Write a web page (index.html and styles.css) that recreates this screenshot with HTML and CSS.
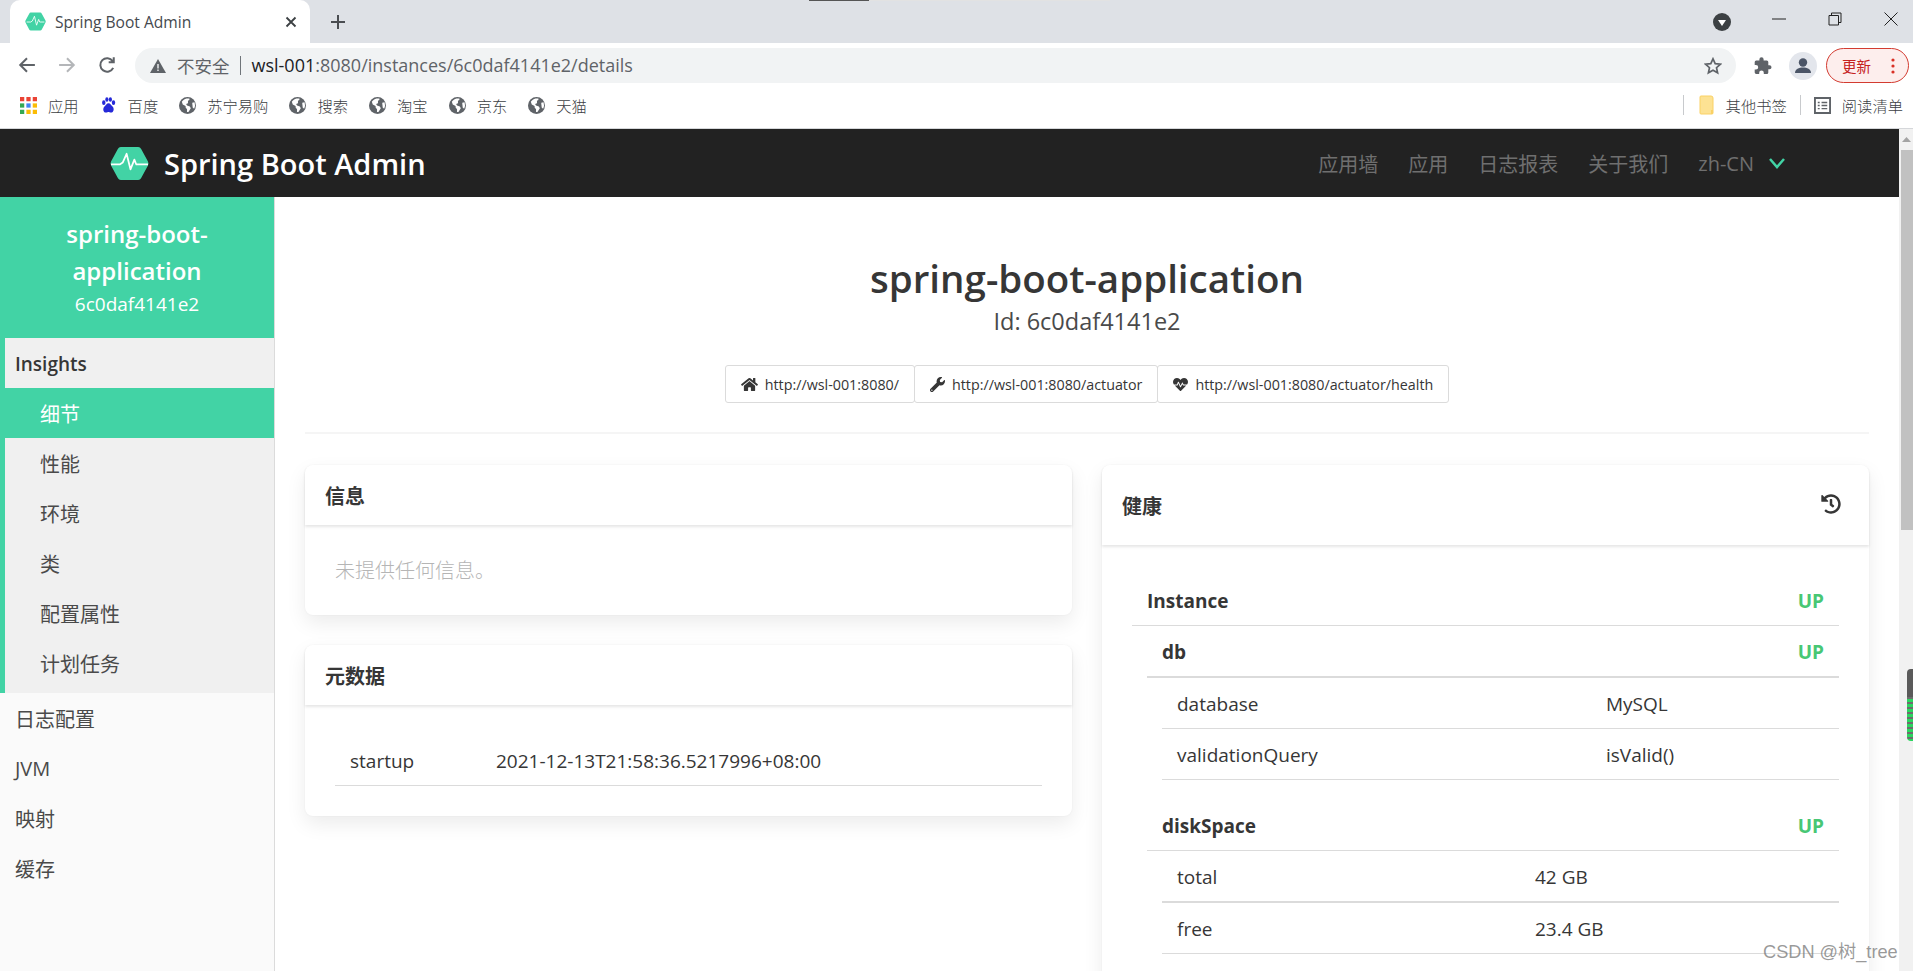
FILE: index.html
```html
<!DOCTYPE html>
<html lang="zh-CN">
<head>
<meta charset="utf-8">
<title>Spring Boot Admin</title>
<link rel="stylesheet" href="styles.css">
</head>
<body>
<div class="top-progress"><span class="top-progress-fill"></span></div>
<div class="tabbar">
  <div class="tab">
    <svg class="tab-fav" viewBox="0 0 40 36"><path class="hex" d="M11 1h18q2 0 3 2l7 13q1 2 0 4l-7 13q-1 2-3 2H11q-2 0-3-2L1 20q-1-2 0-4L8 3q1-2 3-2z"/><path class="pulse" d="M3 19h8l3-2 4-9 4 17 4-11 2 5h9"/></svg>
    <span class="tab-title">Spring Boot Admin</span>
    <svg class="tab-close" viewBox="0 0 12 12"><path d="M1.5 1.5l9 9M10.5 1.5l-9 9"/></svg>
  </div>
  <svg class="tab-new" viewBox="0 0 16 16"><path d="M8 1v14M1 8h14"/></svg>
  <div class="win-controls">
    <svg class="win-profile" viewBox="0 0 18 18"><circle cx="9" cy="9" r="9" fill="#3c4043"/><path d="M5 7h8l-4 6z" fill="#fff"/></svg>
    <svg class="win-btn" viewBox="0 0 14 14"><path d="M0 7h14"/></svg>
    <svg class="win-btn" viewBox="0 0 14 14"><path d="M1 3.5h9.5V13H1zM3.5 3.5V1H13v9.5h-2.5"/></svg>
    <svg class="win-btn" viewBox="0 0 14 14"><path d="M.5.5l13 13M13.500 .5l-13 13"/></svg>
  </div>
</div>
<div class="toolbar">
  <svg class="tb-ico" viewBox="0 0 16 16"><path class="st-dark" d="M15 8H2M8 2L2 8l6 6"/></svg>
  <svg class="tb-ico" viewBox="0 0 16 16"><path class="st-light" d="M1 8h13M8 2l6 6-6 6"/></svg>
  <svg class="tb-ico" viewBox="0 0 16 16"><path class="st-dark" d="M13.500 10.500A6 6 0 1 1 13 4.500M14 1v4.500H9.500"/></svg>
  <div class="omnibox">
    <svg class="warn" viewBox="0 0 16 14"><path d="M8 0l8 14H0z" fill="#5f6368"/><path d="M7.300 5h1.400v4.500H7.300zM7.300 10.500h1.400V12H7.300z" fill="#f1f3f4"/></svg>
    <span class="insecure">不安全</span>
    <span class="omni-sep"></span>
    <span class="url"><span class="url-host">wsl-001</span>:8080/instances/6c0daf4141e2/details</span>
    <svg class="star" viewBox="0 0 18 18"><path d="M9 1.800l2.200 4.800 5.200.6-3.900 3.500 1.100 5.100L9 13.200l-4.600 2.600 1.100-5.100-3.900-3.500 5.200-.6z"/></svg>
  </div>
  <svg class="puzzle" viewBox="0 0 18 18"><path d="M15.500 8.300h-1.200V5a1.500 1.500 0 0 0-1.500-1.500H9.600V2.300a2.100 2.100 0 0 0-4.200 0v1.200H2.200A1.500 1.500 0 0 0 .7 5v3h1.200a2.300 2.300 0 0 1 0 4.600H.7v3A1.500 1.500 0 0 0 2.200 17h3v-1.200a2.300 2.300 0 0 1 4.600 0V17h3a1.500 1.500 0 0 0 1.500-1.500v-3.200h1.200a2 2 0 0 0 0-4z"/></svg>
  <svg class="avatar" viewBox="0 0 28 28"><circle cx="14" cy="14" r="14" fill="#e3e6ec"/><circle cx="14" cy="10.500" r="4.200" fill="#4b5567"/><path d="M6 21c0-4 4-5.500 8-5.500s8 1.500 8 5.500z" fill="#4b5567"/></svg>
  <div class="update"><span>更新</span><svg class="update-dots" viewBox="0 0 4 16"><circle cx="2" cy="2" r="1.600"/><circle cx="2" cy="8" r="1.600"/><circle cx="2" cy="14" r="1.600"/></svg></div>
</div>
<div class="bookmarks">
  <div class="bm bm-apps">
    <svg class="bm-ico" viewBox="0 0 16 16"><rect x="0" y="0" width="4" height="4" fill="#ea4335"/><rect x="6" y="0" width="4" height="4" fill="#ea4335"/><rect x="12" y="0" width="4" height="4" fill="#ea4335"/><rect x="0" y="6" width="4" height="4" fill="#34a853"/><rect x="6" y="6" width="4" height="4" fill="#4285f4"/><rect x="12" y="6" width="4" height="4" fill="#fbbc05"/><rect x="0" y="12" width="4" height="4" fill="#34a853"/><rect x="6" y="12" width="4" height="4" fill="#fbbc05"/><rect x="12" y="12" width="4" height="4" fill="#fbbc05"/></svg>
    <span>应用</span>
  </div>
  <div class="bm">
    <svg class="bm-ico" viewBox="0 0 18 18" fill="#2529d8"><ellipse cx="4" cy="6" rx="1.800" ry="2.500"/><ellipse cx="7.300" cy="2.700" rx="1.700" ry="2.400"/><ellipse cx="11" cy="2.700" rx="1.700" ry="2.400"/><ellipse cx="14.300" cy="6" rx="1.800" ry="2.500"/><path d="M9 6.500c2 0 2.800 2.300 4.300 3.500 2 1.700 1.500 6.500-1.800 6.500-1.300 0-1.700-.5-2.500-.5s-1.300.5-2.600.5C3 16.500 2.800 11.700 4.700 10 6.200 8.800 7 6.500 9 6.500z"/></svg>
    <span>百度</span>
  </div>
  <div class="bm"><svg class="bm-ico globe" viewBox="0 0 18 18"><use href="#globe"/></svg><span>苏宁易购</span></div>
  <div class="bm"><svg class="bm-ico globe" viewBox="0 0 18 18"><use href="#globe"/></svg><span>搜索</span></div>
  <div class="bm"><svg class="bm-ico globe" viewBox="0 0 18 18"><use href="#globe"/></svg><span>淘宝</span></div>
  <div class="bm"><svg class="bm-ico globe" viewBox="0 0 18 18"><use href="#globe"/></svg><span>京东</span></div>
  <div class="bm"><svg class="bm-ico globe" viewBox="0 0 18 18"><use href="#globe"/></svg><span>天猫</span></div>
  <div class="bm-right">
    <span class="bm-sep"></span>
    <div class="bm"><svg class="bm-ico folder" viewBox="0 0 16 20"><path d="M1 2q0-1 1-1h10q2 0 2 2v15q0 1-1 1H2q-1 0-1-1z" fill="#fde293" stroke="#fad165"/><path d="M12 19v-4h2v4z" fill="#fad165"/></svg><span>其他书签</span></div>
    <span class="bm-sep"></span>
    <div class="bm"><svg class="bm-ico" viewBox="0 0 18 18"><path d="M1 1h16v16H1z" fill="#fff" stroke="#5f6368" stroke-width="2"/><path d="M4 5h2v1.500H4zM8 5h6v1.500H8zM4 8.300h2v1.500H4zM8 8.300h6v1.500H8zM4 11.600h2v1.500H4zM8 11.600h6v1.500H8z" fill="#5f6368"/></svg><span>阅读清单</span></div>
  </div>
</div>
<svg class="defs" width="0" height="0"><defs><g id="globe"><circle cx="9" cy="9" r="9" fill="#5f6368"/><path d="M8 1.500c-2 .4-4 1.800-5 3.500l1 3 3 1.500v1.500l1.500 2v3H10l2.500-4-1-2-3-1-1-1.500 2-1V4l1.500-.8V1.700z" fill="#fff"/><path d="M14 6l2.500-.5.500 4-1 3-1.500-1.500z" fill="#fff"/></g></defs></svg>

<div class="viewport">
  <div class="page">
    <header class="navbar">
      <div class="brand">
        <svg class="logo" viewBox="0 0 40 36"><path class="hex" d="M11 1h18q2 0 3 2l7 13q1 2 0 4l-7 13q-1 2-3 2H11q-2 0-3-2L1 20q-1-2 0-4L8 3q1-2 3-2z"/><path class="pulse" d="M1 19h9l3-2 4-9 4 16 4-10 2 5h12"/></svg>
        <span class="brand-name">Spring Boot Admin</span>
      </div>
      <nav class="nav">
        <a class="nav-item">应用墙</a>
        <a class="nav-item">应用</a>
        <a class="nav-item">日志报表</a>
        <a class="nav-item">关于我们</a>
        <a class="nav-item nav-lang">zh-CN<svg class="chev" viewBox="0 0 18 12"><path d="M2 2l7 8 7-8"/></svg></a>
      </nav>
    </header>
    <div class="content">
      <aside class="sidebar">
        <div class="side-head">
          <div class="side-name">spring-boot-<br>application</div>
          <div class="side-id">6c0daf4141e2</div>
        </div>
        <div class="side-group">
          <div class="side-item side-top">Insights</div>
          <div class="side-item side-sub active">细节</div>
          <div class="side-item side-sub">性能</div>
          <div class="side-item side-sub">环境</div>
          <div class="side-item side-sub">类</div>
          <div class="side-item side-sub">配置属性</div>
          <div class="side-item side-sub">计划任务</div>
        </div>
        <div class="side-rest">
          <div class="side-item side-top">日志配置</div>
          <div class="side-item side-top">JVM</div>
          <div class="side-item side-top">映射</div>
          <div class="side-item side-top">缓存</div>
        </div>
      </aside>
      <main class="main">
        <section class="hero">
          <h1 class="hero-title">spring-boot-application</h1>
          <div class="hero-id">Id: 6c0daf4141e2</div>
          <div class="links">
            <a class="link-btn"><svg class="fa" viewBox="0 0 576 512"><path d="M280.37 148.26L96 300.11V464a16 16 0 0 0 16 16l112.06-.29a16 16 0 0 0 15.92-16V368a16 16 0 0 1 16-16h64a16 16 0 0 1 16 16v95.64a16 16 0 0 0 16 16.05L464 480a16 16 0 0 0 16-16V300L295.67 148.26a12.19 12.19 0 0 0-15.3 0zM571.6 251.47L488 182.56V44.05a12 12 0 0 0-12-12h-56a12 12 0 0 0-12 12v72.61L318.47 43a48 48 0 0 0-61 0L4.34 251.47a12 12 0 0 0-1.6 16.9l25.5 31A12 12 0 0 0 45.15 301l235.22-193.74a12.19 12.19 0 0 1 15.3 0L530.9 301a12 12 0 0 0 16.9-1.6l25.5-31a12 12 0 0 0-1.7-16.93z"/></svg>http://wsl-001:8080/</a>
            <a class="link-btn"><svg class="fa fa-s" viewBox="0 0 512 512"><path d="M507.73 109.1c-2.24-9.03-13.54-12.09-20.12-5.51l-74.36 74.36-67.88-11.31-11.31-67.88 74.36-74.36c6.62-6.62 3.43-17.9-5.66-20.16-47.38-11.74-99.55.91-136.58 37.93-39.64 39.64-50.55 97.1-34.05 147.2L18.74 402.76c-24.99 24.99-24.99 65.51 0 90.5 24.99 24.99 65.51 24.99 90.5 0l213.21-213.21c50.12 16.71 107.47 5.68 147.37-34.22 37.07-37.07 49.7-89.32 37.91-136.73zM64 472c-13.25 0-24-10.75-24-24 0-13.26 10.75-24 24-24s24 10.74 24 24c0 13.25-10.75 24-24 24z"/></svg>http://wsl-001:8080/actuator</a>
            <a class="link-btn"><svg class="fa fa-s" viewBox="0 0 512 512"><path d="M320.2 243.8l-49.7 99.4c-6 12.1-23.4 11.7-28.9-.6l-56.9-126.3-30 71.7H60.6l182.5 186.5c7.1 7.3 18.6 7.3 25.7 0L451.4 288H342.3l-22.1-44.2zM473.7 73.9l-2.4-2.5c-51.5-52.6-135.8-52.6-187.4 0L256 100l-27.9-28.5c-51.5-52.7-135.9-52.7-187.4 0l-2.4 2.4C-10.4 123.7-12.5 203 31 256h102.4l35.9-86.2c5.4-12.9 23.6-13.2 29.4-.4l58.2 129.3 49-97.9c5.9-11.8 22.7-11.8 28.6 0l27.6 55.2H481c43.5-53 41.4-132.3-7.3-182.1z"/></svg>http://wsl-001:8080/actuator/health</a>
          </div>
        </section>
        <hr class="divider">
        <div class="columns">
          <div class="col">
            <div class="card card-info">
              <div class="card-head">信息</div>
              <div class="card-body empty">未提供任何信息。</div>
            </div>
            <div class="card card-meta">
              <div class="card-head">元数据</div>
              <div class="card-body">
                <div class="meta-row"><span class="meta-key">startup</span><span>2021-12-13T21:58:36.5217996+08:00</span></div>
              </div>
            </div>
          </div>
          <div class="col">
            <div class="card card-health">
              <div class="card-head card-head-tall">
                <span>健康</span>
                <svg class="history" viewBox="0 0 512 512"><path d="M504 255.531c.253 136.64-111.18 248.372-247.82 248.468-59.015.042-113.223-20.53-155.822-54.911-11.077-8.94-11.905-25.541-1.839-35.607l11.267-11.267c8.609-8.609 22.353-9.551 31.891-1.984C173.062 425.135 212.781 440 256 440c101.705 0 184-82.311 184-184 0-101.705-82.311-184-184-184-48.814 0-93.149 18.969-126.068 49.932l50.754 50.754c10.08 10.08 2.941 27.314-11.313 27.314H24c-8.837 0-16-7.163-16-16V38.627c0-14.254 17.234-21.393 27.314-11.314l49.372 49.372C129.209 34.136 189.552 8 256 8c136.81 0 247.747 110.78 248 247.531zm-180.912 78.784l9.823-12.63c8.138-10.463 6.253-25.542-4.21-33.679L288 256.349V152c0-13.255-10.745-24-24-24h-16c-13.255 0-24 10.745-24 24v135.651l65.409 50.874c10.463 8.137 25.541 6.253 33.679-4.21z"/></svg>
              </div>
              <div class="card-body health">
                <div class="h-row"><b>Instance</b><b class="up">UP</b></div>
                <div class="h-row lvl1 thick"><b>db</b><b class="up">UP</b></div>
                <div class="h-row lvl2"><span class="key key-wide">database</span><span>MySQL</span></div>
                <div class="h-row lvl2"><span class="key key-wide">validationQuery</span><span>isValid()</span></div>
                <div class="h-row lvl1 spaced"><b>diskSpace</b><b class="up">UP</b></div>
                <div class="h-row lvl2 thick"><span class="key key-narrow">total</span><span>42 GB</span></div>
                <div class="h-row lvl2"><span class="key key-narrow">free</span><span>23.4 GB</span></div>
              </div>
            </div>
          </div>
        </div>
      </main>
    </div>
  </div>
  <div class="scrollbar">
    <svg class="sb-arrow" viewBox="0 0 14 17"><path d="M3 13l4.500-5 4.500 5z"/></svg>
    <div class="sb-thumb"></div>
  </div>
</div>
<div class="edge-widget"></div>
<div class="watermark">CSDN @树_tree</div>
</body>
</html>
```

FILE: styles.css
```css
* { box-sizing: border-box; }
html, body { margin: 0; height: 971px; overflow: hidden; }
body { font-family: "Open Sans", "Noto Sans CJK SC", sans-serif; font-size: 19px; color: #363636; background: #fff; display: flex; flex-direction: column; }
.defs { position: absolute; }

.top-progress { position: absolute; left: 809px; top: 0; width: 301px; height: 1px; background: #e2e2e2; z-index: 2; }
.top-progress-fill { display: block; width: 60px; height: 1px; background: #555; }

.tabbar { height: 43px; background: #dee1e6; display: flex; align-items: center; flex: none; padding-left: 10px; }
.tab { width: 300px; height: 43px; align-self: flex-end; background: #fff; border-radius: 10px 10px 0 0; display: flex; align-items: center; padding: 0 13px 0 15px; }
.tab-fav { width: 21px; height: 19px; margin-right: 9px; }
.hex { fill: #42d3a5; }
.pulse { fill: none; stroke: #fff; stroke-width: 1.6; stroke-linejoin: round; }
.tab-title { font-size: 15.6px; color: #45494e; flex: 1; white-space: nowrap; }
.tab-close { width: 12px; height: 12px; fill: none; stroke: #3c4043; stroke-width: 1.800; }
.tab-new { width: 16px; height: 16px; margin-left: 20px; fill: none; stroke: #4a4d51; stroke-width: 2; }
.win-controls { margin-left: auto; display: flex; align-items: center; padding-right: 15px; gap: 42px; }
.win-profile { width: 18px; height: 18px; margin-right: -1px; margin-top: 1px; }
.win-btn { width: 14px; height: 14px; fill: none; stroke: #222; stroke-width: 1; margin-top: -6px; }

.toolbar { height: 40px; flex: none; display: flex; align-items: center; padding: 0 4px 0 18px; background: #fff; }
.tb-ico { width: 18px; height: 18px; margin: 3px 22px 0 0; fill: none; stroke-width: 1.800; flex: none; }
.toolbar .tb-ico:nth-child(3) { margin-right: 19px; }
.st-dark { stroke: #5f6368; }
.st-light { stroke: #b4b6b9; }
.omnibox { width: 1601px; flex: none; height: 35px; margin-top: 5px; background: #f1f3f4; border-radius: 18px; display: flex; align-items: center; padding: 0 14px 0 15px; }
.warn { width: 16px; height: 14px; margin-right: 11px; }
.insecure { font-size: 17.5px; color: #5f6368; }
.omni-sep { width: 1px; height: 19px; background: #70757a; margin: 0 11px 0 10px; }
.url { font-size: 18px; line-height: 22px; padding-bottom: 2px; color: #5f6368; flex: 1; white-space: nowrap; }
.url-host { color: #202124; }
.star { width: 18px; height: 18px; fill: none; stroke: #5f6368; stroke-width: 1.700; }
.puzzle { width: 18px; height: 18px; fill: #5f6368; margin: 5px 0 0 18px; flex: none; }
.avatar { width: 28px; height: 28px; margin: 5px 0 0 17px; flex: none; }
.update { width: 83px; height: 35px; flex: none; margin: 5px 0 0 9px; border: 1.500px solid #d33b30; border-radius: 18px; background: #fdeeed; display: flex; align-items: center; justify-content: space-between; padding: 0 13px 0 15px; color: #c5221f; font-size: 14.500px; }
.update-dots { width: 4px; height: 16px; fill: #d93025; }

.bookmarks { height: 46px; flex: none; border-bottom: 1px solid #d5d7da; display: flex; align-items: center; padding: 0 10px 1px 20px; gap: 21px; background: #fff; font-size: 15.3px; color: #3c4043; }
.bm { display: flex; align-items: center; gap: 11px; white-space: nowrap; font-family: "Noto Sans CJK SC", sans-serif; font-weight: 300; }
.bm-ico { width: 17px; height: 17px; flex: none; }
.bm-right { margin-left: auto; display: flex; align-items: center; gap: 13px; }
.bm-sep { width: 1px; height: 20px; background: #c8cacd; }
.bm-sep:first-child { margin-right: 2px; }
.folder { width: 16px; height: 20px; }

.viewport { flex: 1; display: flex; min-height: 0; position: relative; }
.page { flex: 1; min-width: 0; display: flex; flex-direction: column; }
.scrollbar { width: 14px; flex: none; background: #f1f1f1; display: flex; flex-direction: column; }
.sb-arrow { width: 14px; height: 17px; fill: #a3a3a3; flex: none; }
.sb-thumb { margin: 4px 0 0 2px; height: 380px; background: #c1c1c1; }

.navbar { height: 68px; background: #222; display: flex; align-items: center; flex: none; padding: 0 113px 0 110px; }
.brand { display: flex; align-items: center; gap: 15px; }
.logo { width: 39px; height: 35px; }
.logo .pulse { stroke-width: 1.800; }
.brand-name { color: #fff; font-size: 29px; font-weight: 600; white-space: nowrap; }
.nav { margin-left: auto; display: flex; align-items: center; gap: 30px; }
.nav-item { color: #6f6f6f; font-size: 20px; white-space: nowrap; }
.nav-lang { display: flex; align-items: center; gap: 14px; }
.chev { width: 18px; height: 12px; fill: none; stroke: #42d3a5; stroke-width: 2.500; }

.content { flex: 1; display: flex; min-height: 0; }
.sidebar { width: 275px; flex: none; background: #fafafa; border-right: 1px solid #dbdbdb; }
.side-head { height: 141px; background: #42d3a5; color: #fff; text-align: center; padding: 18px 10px 0; }
.side-name { font-size: 24px; line-height: 37px; font-weight: 600; }
.side-id { font-size: 19px; line-height: 30px; }
.side-group { height: 355px; background: #f0f0f0; border-left: 5px solid #42d3a5; }
.side-item { height: 50px; display: flex; align-items: center; font-size: 20px; color: #4a4a4a; }
.side-group .side-top { padding: 2px 0 0 10px; font-weight: 600; font-size: 19px; color: #363636; }
.side-sub { padding-left: 35px; }
.side-sub.active { background: #42d3a5; color: #fff; }
.side-rest .side-item { padding-left: 15px; height: 50px; }

.main { flex: 1; min-width: 0; padding: 0 30px; overflow: hidden; background: #fff; }
.hero { text-align: center; padding-top: 56px; }
.hero-title { margin: 0; font-size: 38.5px; line-height: 51px; font-weight: 600; color: #363636; }
.hero-id { font-size: 23.5px; line-height: 34px; color: #4a4a4a; }
.links { display: flex; justify-content: center; margin-top: 27px; }
.link-btn { height: 38px; border: 1px solid #dbdbdb; border-radius: 3px; display: flex; align-items: center; padding: 0 15px; gap: 7px; font-size: 14.3px; color: #363636; white-space: nowrap; }
.link-btn + .link-btn { margin-left: -1px; }
.fa { width: 17px; height: 15px; fill: #363636; flex: none; }
.fa-s { width: 15px; }
.divider { border: 0; height: 2px; background: #f5f5f5; margin: 29px 0 31px; }

.columns { display: flex; gap: 30px; align-items: flex-start; }
.col { width: 767px; flex: none; }
.card { background: #fff; border-radius: 8px; box-shadow: 0 8px 20px rgba(10,10,10,.08), 0 0 2px rgba(10,10,10,.05); }
.card-head { height: 60px; display: flex; align-items: center; justify-content: space-between; padding: 0 20px; font-size: 20px; font-weight: 700; color: #363636; box-shadow: 0 2px 3px rgba(10,10,10,.1); font-family: "Noto Sans CJK SC", sans-serif; border-radius: 8px 8px 0 0; }
.card-head-tall { height: 80px; }
.card-info { height: 150px; margin-bottom: 30px; }
.card-meta { height: 171px; }
.card-body { padding: 0 30px; }
.empty { color: #b5b5b5; padding-top: 31px; font-size: 20px; line-height: 30px; font-weight: 300; }
.meta-row { height: 50px; border-bottom: 1px solid #dbdbdb; display: flex; align-items: center; padding: 1px 15px 0; }
.card-meta .card-body { padding-top: 31px; }
.meta-key { width: 146px; flex: none; }
.meta-row, .h-row { font-size: 19px; color: #363636; }
.history { width: 20px; height: 20px; fill: #363636; margin-right: 8px; margin-top: -3px; }

.health { padding-top: 30px; height: 600px; }
.h-row { height: 51px; display: flex; align-items: center; justify-content: space-between; border-bottom: 1px solid #dbdbdb; padding: 2px 15px 0; }
.h-row b { font-weight: 700; }
.lvl1 { margin-left: 15px; }
.lvl2 { margin-left: 30px; justify-content: flex-start; }
.thick { border-bottom-width: 2px; height: 52px; }
.spaced { margin-top: 20px; }
.up { color: #48c774; }
.key-wide { width: 429px; }
.key-narrow { width: 358px; }

.edge-widget { position: absolute; right: 0; top: 669px; width: 6px; height: 72px; border-radius: 4px 0 0 4px; background: linear-gradient(#5a5a5a 0 28px, transparent 28px), repeating-linear-gradient(#2bd65f 0 3px, #6d6d6d 3px 5px); }
.watermark { position: absolute; left: 1763px; top: 940px; font-family: "Liberation Sans", "Noto Sans CJK SC", sans-serif; font-size: 18.2px; line-height: 24px; color: rgba(120,120,120,.75); white-space: nowrap; }
```
